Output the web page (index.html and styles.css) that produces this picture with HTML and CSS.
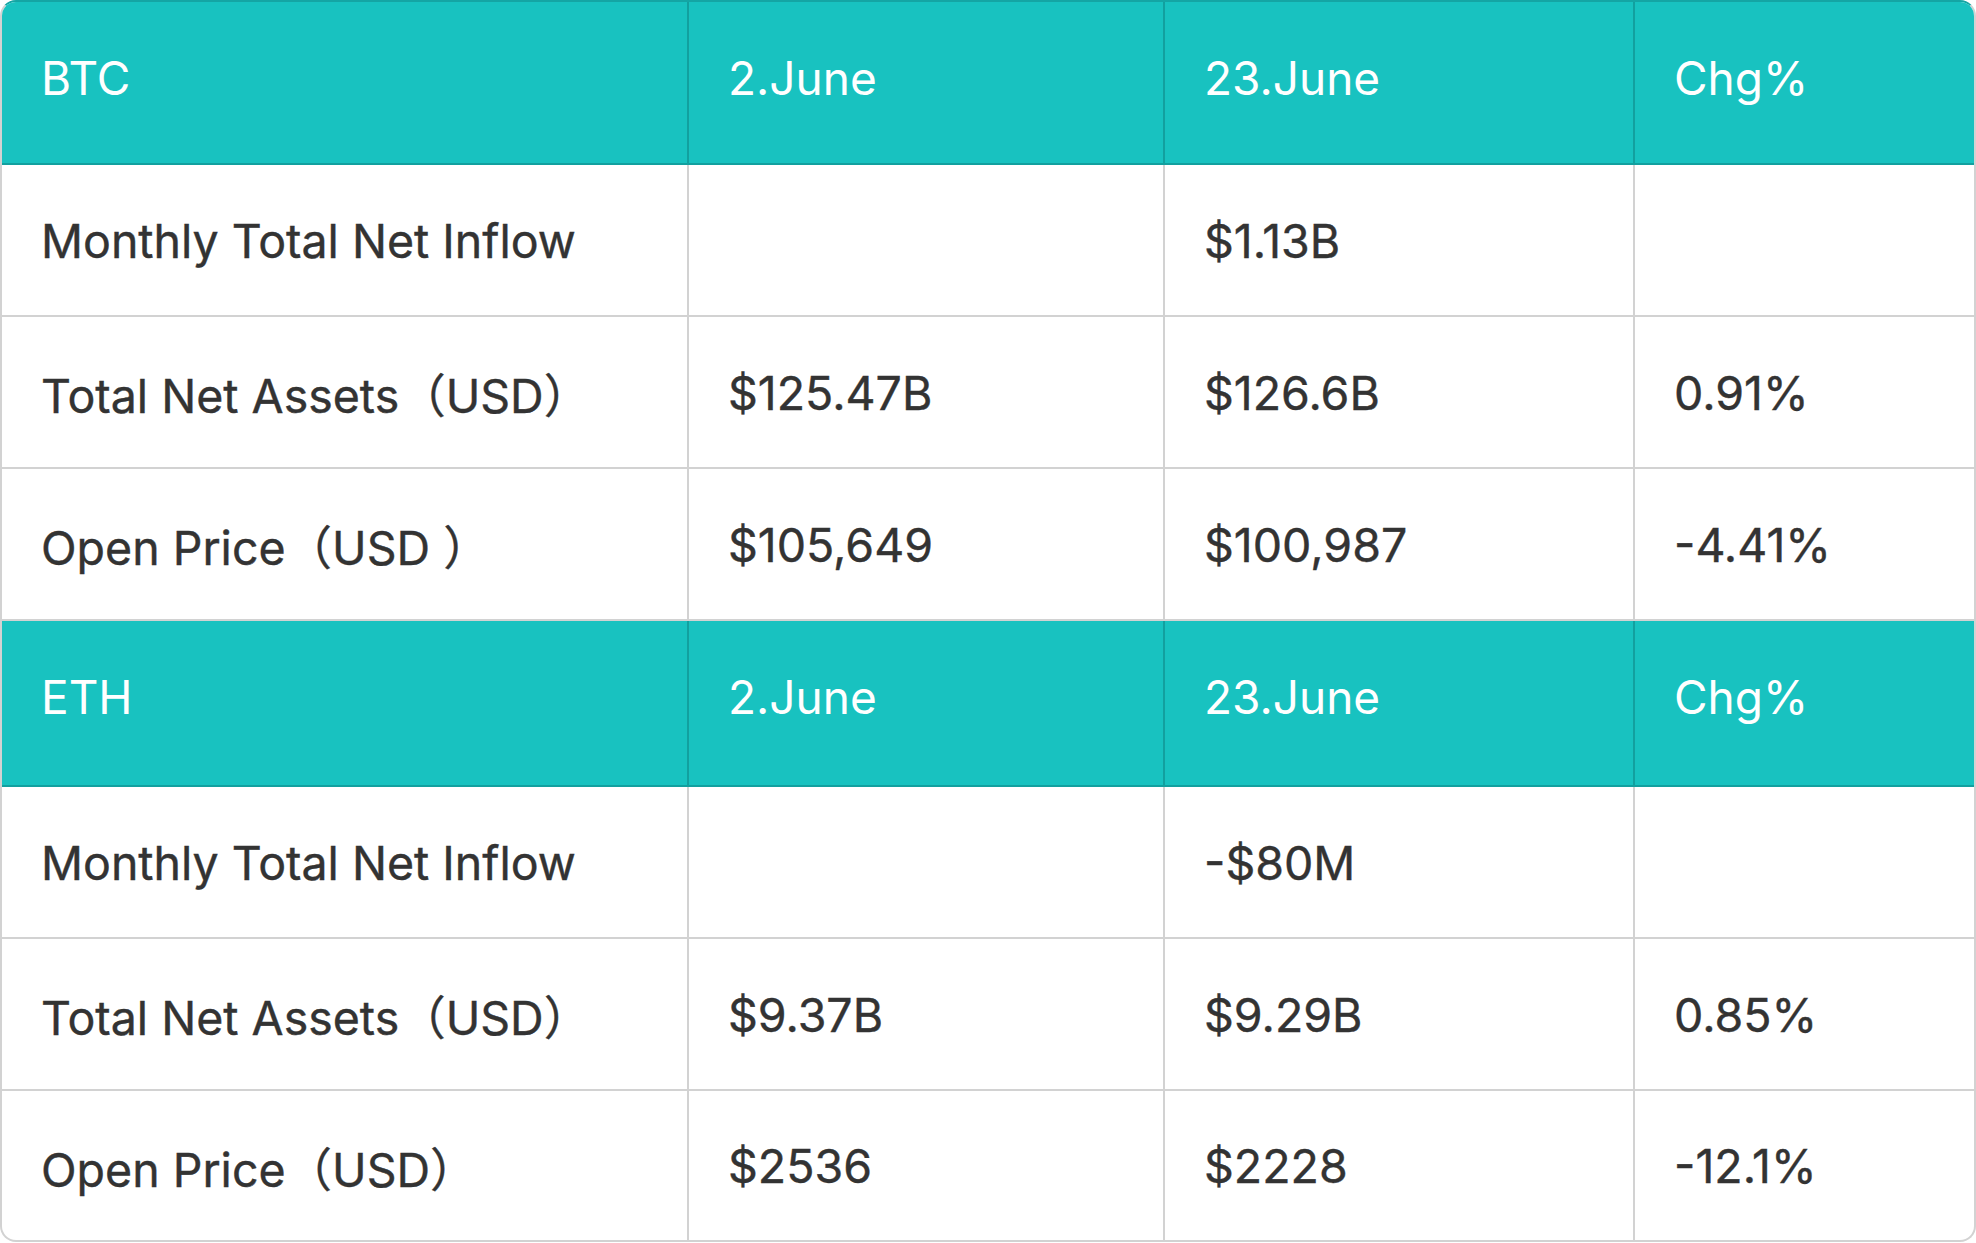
FILE: index.html
```html
<!DOCTYPE html>
<html>
<head>
<meta charset="utf-8">
<link rel="stylesheet" href="styles.css">
</head>
<body>
<div class="card">
  <table class="grid">
    <colgroup>
      <col class="c1"><col class="c2"><col class="c3"><col class="c4">
    </colgroup>
    <tr class="head"><td>BTC</td><td>2.June</td><td>23.June</td><td>Chg%</td></tr>
    <tr><td>Monthly Total Net Inflow</td><td></td><td>$1.13B</td><td></td></tr>
    <tr><td>Total Net Assets（USD）</td><td>$125.47B</td><td>$126.6B</td><td>0.91%</td></tr>
    <tr><td>Open Price（USD ）</td><td>$105,649</td><td>$100,987</td><td>-4.41%</td></tr>
    <tr class="head head2"><td>ETH</td><td>2.June</td><td>23.June</td><td>Chg%</td></tr>
    <tr><td>Monthly Total Net Inflow</td><td></td><td>-$80M</td><td></td></tr>
    <tr><td>Total Net Assets（USD）</td><td>$9.37B</td><td>$9.29B</td><td>0.85%</td></tr>
    <tr class="last"><td>Open Price（USD）</td><td>$2536</td><td>$2228</td><td>-12.1%</td></tr>
  </table>
</div>
</body>
</html>
```
FILE: styles.css
```css
html, body {
  margin: 0;
  padding: 0;
  background: #ffffff;
}
.card {
  width: 1976px;
  box-sizing: border-box;
  border: 2px solid #d2d2d2;
  border-top-color: #14a5a4;
  border-radius: 16px;
  overflow: hidden;
  background: #fff;
}
.grid {
  width: 100%;
  border-collapse: separate;
  border-spacing: 0;
  table-layout: fixed;
  font-family: Inter, "Noto Sans CJK SC", sans-serif;
  font-size: 46.5px;
  font-weight: 400;
  color: #333333;
}
.c1 { width: 687px; }
.c2 { width: 476px; }
.c3 { width: 470px; }
.c4 { width: auto; }
.grid td {
  height: 152px;
  padding: 1px 0 0 39px;
  box-sizing: border-box;
  border-right: 2px solid #d2d2d2;
  border-bottom: 2px solid #d2d2d2;
  vertical-align: middle;
  white-space: nowrap;
  -webkit-text-stroke: 0.4px #333333;
}
.grid td:last-child {
  border-right: none;
}
.grid tr.head td {
  height: 163px;
  padding: 0 0 10px 39px;
  background: #18c2c0;
  color: #ffffff;
  font-size: 46px;
  -webkit-text-stroke: 0;
  border-right-color: #12a09f;
  border-bottom-color: #12a09f;
}
.grid tr.head2 td {
  height: 166px;
  padding-bottom: 12px;
}
.grid tr.head td:last-child { border-right: none; }
.grid tr.last td {
  height: 149px;
  border-bottom: none;
}
```
